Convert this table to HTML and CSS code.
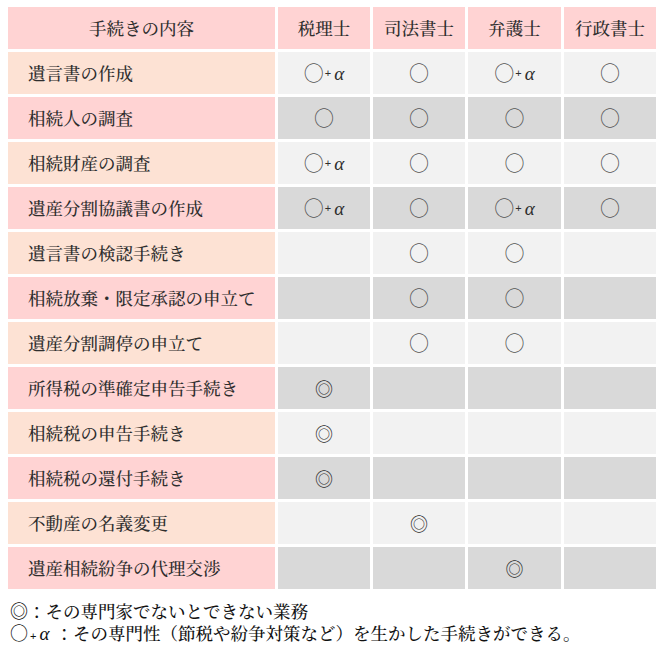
FILE: index.html
```html
<!DOCTYPE html>
<html lang="ja">
<head>
<meta charset="utf-8">
<link rel="stylesheet" href="styles.css">
</head>
<body>
<div class="table">
  <div class="row head">
    <div class="c first">手続きの内容</div>
    <div class="c">税理士</div>
    <div class="c">司法書士</div>
    <div class="c">弁護士</div>
    <div class="c">行政書士</div>
  </div>
  <div class="row odd">
    <div class="c first">遺言書の作成</div>
    <div class="c"><span class="o">○</span><span class="p">+</span><span class="a">α</span></div>
    <div class="c"><span class="o">○</span></div>
    <div class="c"><span class="o">○</span><span class="p">+</span><span class="a">α</span></div>
    <div class="c"><span class="o">○</span></div>
  </div>
  <div class="row even">
    <div class="c first">相続人の調査</div>
    <div class="c"><span class="o">○</span></div>
    <div class="c"><span class="o">○</span></div>
    <div class="c"><span class="o">○</span></div>
    <div class="c"><span class="o">○</span></div>
  </div>
  <div class="row odd">
    <div class="c first">相続財産の調査</div>
    <div class="c"><span class="o">○</span><span class="p">+</span><span class="a">α</span></div>
    <div class="c"><span class="o">○</span></div>
    <div class="c"><span class="o">○</span></div>
    <div class="c"><span class="o">○</span></div>
  </div>
  <div class="row even">
    <div class="c first">遺産分割協議書の作成</div>
    <div class="c"><span class="o">○</span><span class="p">+</span><span class="a">α</span></div>
    <div class="c"><span class="o">○</span></div>
    <div class="c"><span class="o">○</span><span class="p">+</span><span class="a">α</span></div>
    <div class="c"><span class="o">○</span></div>
  </div>
  <div class="row odd">
    <div class="c first">遺言書の検認手続き</div>
    <div class="c"></div>
    <div class="c"><span class="o">○</span></div>
    <div class="c"><span class="o">○</span></div>
    <div class="c"></div>
  </div>
  <div class="row even">
    <div class="c first">相続放棄・限定承認の申立て</div>
    <div class="c"></div>
    <div class="c"><span class="o">○</span></div>
    <div class="c"><span class="o">○</span></div>
    <div class="c"></div>
  </div>
  <div class="row odd">
    <div class="c first">遺産分割調停の申立て</div>
    <div class="c"></div>
    <div class="c"><span class="o">○</span></div>
    <div class="c"><span class="o">○</span></div>
    <div class="c"></div>
  </div>
  <div class="row even">
    <div class="c first">所得税の準確定申告手続き</div>
    <div class="c"><span class="d">◎</span></div>
    <div class="c"></div>
    <div class="c"></div>
    <div class="c"></div>
  </div>
  <div class="row odd">
    <div class="c first">相続税の申告手続き</div>
    <div class="c"><span class="d">◎</span></div>
    <div class="c"></div>
    <div class="c"></div>
    <div class="c"></div>
  </div>
  <div class="row even">
    <div class="c first">相続税の還付手続き</div>
    <div class="c"><span class="d">◎</span></div>
    <div class="c"></div>
    <div class="c"></div>
    <div class="c"></div>
  </div>
  <div class="row odd">
    <div class="c first">不動産の名義変更</div>
    <div class="c"></div>
    <div class="c"><span class="d">◎</span></div>
    <div class="c"></div>
    <div class="c"></div>
  </div>
  <div class="row even">
    <div class="c first">遺産相続紛争の代理交渉</div>
    <div class="c"></div>
    <div class="c"></div>
    <div class="c"><span class="d">◎</span></div>
    <div class="c"></div>
  </div>
</div>
<div class="notes">
  <p class="line"><span class="nd">◎</span>：その専門家でないとできない業務</p>
  <p class="line"><span class="no">○</span><span class="np">+</span><span class="na">α</span>：その専門性（節税や紛争対策など）を生かした手続きができる。</p>
</div>
</body>
</html>
```
FILE: styles.css
```css
html, body {
  margin: 0;
  padding: 0;
  background: #ffffff;
}
body {
  padding: 7px 8px 0 8px;
  font-family: "Noto Serif CJK JP", "Noto Sans CJK JP", serif;
  color: #2e2e2e;
  font-size: 17.5px;
  font-weight: 500;
}
.table {
  display: flex;
  flex-direction: column;
  gap: 3px;
  width: 648px;
}
.row {
  display: grid;
  grid-template-columns: 267px 92px 92px 93px 92px;
  column-gap: 3px;
  height: 42px;
}
.c {
  display: flex;
  align-items: center;
  justify-content: center;
  line-height: 1;
}
.first {
  justify-content: flex-start;
  padding-left: 20px;
}
.head .c { background: #ffd3d3; justify-content: center; padding-left: 0; }
.odd .c { background: #f2f2f2; }
.odd .first { background: #fde2d4; }
.even .c { background: #d9d9d9; }
.even .first { background: #ffd3d3; }
.o {
  font-family: "Noto Sans CJK JP", sans-serif;
  font-size: 20px;
  font-weight: 400;
  color: #555555;
}
.p {
  font-family: "Liberation Sans", sans-serif;
  font-size: 11px;
  margin: 0 3px 0 1px;
}
.a {
  font-family: "Liberation Serif", serif;
  font-style: italic;
  font-size: 19px;
}
.d {
  font-family: "Noto Sans CJK JP", sans-serif;
  font-size: 18px;
  font-weight: 400;
}
.notes {
  margin-top: 10px;
  padding-left: 2px;
}
.line {
  margin: 0;
  height: 22px;
  line-height: 22px;
  color: #111111;
  white-space: nowrap;
}
.nd {
  font-family: "Noto Sans CJK JP", sans-serif;
  font-size: 18px;
}
.no {
  font-family: "Noto Sans CJK JP", sans-serif;
  font-size: 18px;
  font-weight: 400;
}
.np {
  font-family: "Liberation Sans", sans-serif;
  font-size: 11px;
  margin: 0 3px 0 2px;
}
.na {
  font-family: "Liberation Serif", serif;
  font-style: italic;
  font-size: 19px;
  margin-right: 6px;
}
```
